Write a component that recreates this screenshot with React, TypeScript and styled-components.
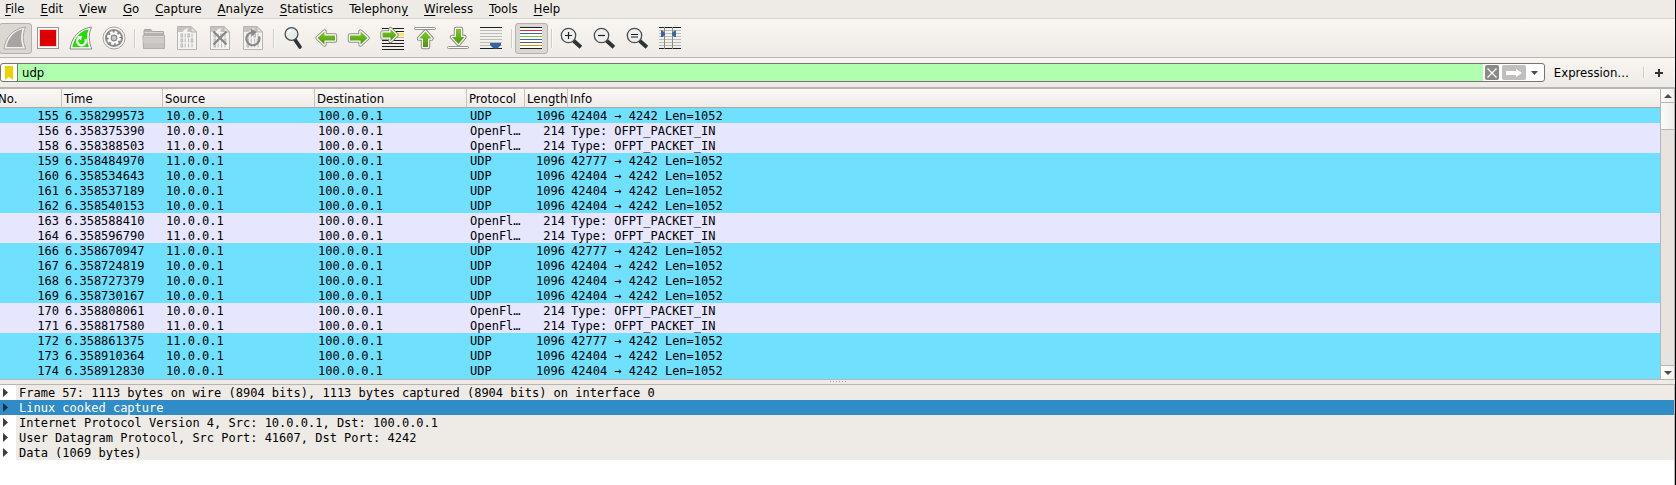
import React, { useState } from "react";
import styled, { createGlobalStyle } from "styled-components";

const UI_FONT = '"DejaVu Sans Condensed", "DejaVu Sans", sans-serif';
const MONO_FONT = '"DejaVu Sans Mono", monospace';
const LINE = "#b8b5b2";
const CHROME = "#eeebe7";

const GlobalStyle = createGlobalStyle`
  * { box-sizing: border-box; }
  body { margin: 0; background: #fff; }
  button, input { font: inherit; color: inherit; }
`;

const Window = styled.div`
  display: flex;
  flex-direction: column;
  min-height: 100vh;
  overflow: hidden;
  border-right: 1px solid #000;
  background: ${CHROME};
  font: 13px/16px ${UI_FONT};
  color: #000;
`;

const MenuBar = styled.nav`
  display: flex;
  height: 19px;
  border-bottom: 1px solid #d6d3cf;
`;

const MenuButton = styled.button`
  padding: 0 0 1px 5px;
  margin-right: 11px;
  border: 0;
  background: none;
  line-height: 16px;
  white-space: nowrap;

  u { text-underline-offset: 2px; }
`;

const ToolBar = styled.div`
  display: flex;
  align-items: center;
  height: 39px;
  margin-left: -1px;
  border-bottom: 1px solid ${LINE};
  background: linear-gradient(#f9f6f2, ${CHROME});
`;

const ToolButton = styled.button<{ $pressed?: boolean }>`
  display: flex;
  align-items: center;
  justify-content: center;
  width: 33px;
  height: 31px;
  padding: 0;
  border: 1px solid ${(p) => (p.$pressed ? "#b5b2ae" : "transparent")};
  border-radius: 3px;
  background: ${(p) => (p.$pressed ? "#dbd8d4" : "none")};
`;

const Separator = styled.span<{ $height: number }>`
  width: 2px;
  height: ${(p) => p.$height}px;
  margin: 0 2px 0 3px;
  border-left: 1px solid #d0cdc9;
  border-right: 1px solid #fbf9f7;
`;

const FilterBar = styled.form`
  display: flex;
  align-items: center;
  height: 31px;
  padding-right: 11px;
  border-bottom: 2px solid ${LINE};
  background: linear-gradient(#f9f6f2, ${CHROME});
`;

const FilterBox = styled.div`
  display: flex;
  flex: 1;
  align-items: center;
  height: 19px;
  border: 1px solid #777471;
  border-radius: 3px;
  background: #fff;
`;

const FilterInput = styled.input`
  flex: 1;
  min-width: 0;
  height: 17px;
  padding: 0 4px;
  margin-right: 2px;
  border: 0;
  border-left: 1px solid #777471;
  outline: 0;
  background: #afffaf;
`;

const BoxButton = styled.button<{ $width: number; $fill?: string }>`
  display: flex;
  align-items: center;
  justify-content: center;
  width: ${(p) => p.$width}px;
  height: 15px;
  padding: 0;
  margin-right: 3px;
  border: 0;
  border-radius: 2px;
  background: ${(p) => p.$fill || "none"};
`;

const BookmarkButton = styled(BoxButton)`
  margin: 0;
`;

const FlatButton = styled.button`
  padding: 0;
  border: 0;
  background: none;
  display: flex;
  align-items: center;
`;

const ExpressionButton = styled(FlatButton)`
  margin: 0 9px;
  padding: 1px 2px 0 0;
`;

const PacketPane = styled.section`
  display: flex;
  border-right: 1px solid ${LINE};
  border-bottom: 1px solid ${LINE};
`;

const PacketList = styled.div`
  flex: 1;
  min-width: 0;
  overflow: hidden;
  padding-bottom: 1px;
  background: #70e0ff;
`;

const PacketTable = styled.table`
  width: calc(100% + 4px);
  margin-left: -4px;
  table-layout: fixed;
  border-collapse: separate;
  border-spacing: 0;
`;

const Col = styled.col<{ $width?: number }>`
  width: ${(p) => (p.$width ? `${p.$width}px` : "auto")};
`;

const HeadCell = styled.th`
  height: 19px;
  padding: 2px 0 0 2px;
  overflow: hidden;
  border-right: 1px solid #c6c3bf;
  border-bottom: 1px solid #a9a6a3;
  background: linear-gradient(#fbf8f5, #eeece8);
  font-weight: normal;
  line-height: 16px;
  text-align: left;
  white-space: nowrap;

  &:last-child { border-right: 0; }
`;

const PacketRow = styled.tr<{ $openflow: boolean }>`
  background: ${(p) => (p.$openflow ? "#e6e6ff" : "#70e0ff")};
`;

const Cell = styled.td<{ $right?: boolean }>`
  height: 15px;
  padding: 2px 3px 0;
  overflow: hidden;
  font: 12px/13px ${MONO_FONT};
  text-align: ${(p) => (p.$right ? "right" : "left")};
  text-overflow: ellipsis;
  white-space: nowrap;
`;

const ScrollBar = styled.div`
  display: flex;
  flex-direction: column;
  width: 14px;
  border-left: 1px solid ${LINE};
  background: #e7e3e0;
`;

const ScrollButton = styled.button<{ $edge: "top" | "bottom" }>`
  display: flex;
  align-items: center;
  justify-content: center;
  height: 14px;
  padding: 0;
  border: 0;
  border-${(p) => p.$edge}: 1px solid ${LINE};
  background: linear-gradient(90deg, #fff, #f2f0ee);
`;

const ScrollThumb = styled.div`
  height: 27px;
  border-bottom: 1px solid ${LINE};
  background: linear-gradient(90deg, #fdfcfc, #efedeb);
`;

const ScrollTrack = styled.div`
  flex: 1;
`;

const Splitter = styled.div`
  display: flex;
  justify-content: center;
  gap: 2px;
  height: 4px;
  padding-top: 1px;
`;

const Dot = styled.span`
  width: 1px;
  height: 1px;
  background: #a5a29f;
`;

const Details = styled.ul`
  flex: 1;
  margin: 0;
  padding: 0;
  border-top: 1px solid ${LINE};
  border-right: 1px solid ${LINE};
  background: #fff;
  list-style: none;
`;

const DetailRow = styled.li<{ $selected: boolean }>`
  display: flex;
  height: 15px;
  background: ${(p) => (p.$selected ? "#308cc6" : "#fff")};
  color: ${(p) => (p.$selected ? "#fff" : "#000")};
`;

const Expander = styled.button<{ $selected: boolean }>`
  display: flex;
  align-items: center;
  width: 16px;
  padding: 0 0 0 3px;
  border: 0;
  background: none;
  color: ${(p) => (p.$selected ? "#12303f" : "#3c3c3c")};
`;

const DetailText = styled.span<{ $selected: boolean }>`
  flex: 1;
  padding: 2px 0 0 3px;
  background: ${(p) => (p.$selected ? "#308cc6" : CHROME)};
  font: 12px/13px ${MONO_FONT};
  white-space: pre;
`;

const Icon = ({ children }: { children: React.ReactNode }) => (
  <svg width="25" height="25" viewBox="0 0 25 25" aria-hidden="true">
    {children}
  </svg>
);

const FIN = "M1 23 C2.5 12 9 3 22.5 1 C19.5 8 19.5 15 22.8 23 Z";
const FIN_INNER = "M3.4 21 C5 13 10 5.500 19.500 3.300 C17.500 9 17.500 15 19.800 21 Z";

const SharkFin = () => (
  <Icon>
    <path d={FIN} fill="#f0efed" stroke="#a9a6a3" />
    <path d={FIN_INNER} fill="#a8a4a1" />
  </Icon>
);

const StopIcon = () => (
  <Icon>
    <rect x="1.500" y="1.500" width="21" height="21" fill="#fff" stroke="#999693" />
    <rect x="3" y="3" width="18" height="18" fill="#f3cfcf" />
    <rect x="4" y="4" width="16" height="16" fill="#dc0000" />
  </Icon>
);

const RestartIcon = () => (
  <Icon>
    <path d={FIN} fill="#fff" stroke="#8b8885" />
    <path d={FIN_INNER} fill="#1ee000" />
    <path d="M9.500 12 A4.300 4.300 0 1 0 16.300 13" fill="none" stroke="#fff" strokeWidth="2.400" />
    <path d="M8 10.200 L13.300 9.700 L11.800 14.600 Z" fill="#fff" />
  </Icon>
);

const OptionsIcon = () => (
  <Icon>
    <circle cx="12" cy="12" r="11" fill="#f7f6f5" stroke="#a6a3a0" />
    <circle cx="12" cy="12" r="9" fill="#8c8a88" />
    <circle cx="12" cy="12" r="5.800" fill="none" stroke="#fff" strokeWidth="2.600" strokeDasharray="2.600 1.950" />
    <circle cx="12" cy="12" r="4.200" fill="#8c8a88" stroke="#fff" strokeWidth="2.400" />
    <circle cx="12" cy="12" r="3.400" fill="#8c8a88" />
    <circle cx="12" cy="12" r="2.200" fill="#c9c7c5" />
  </Icon>
);

const FolderIcon = () => (
  <Icon>
    <path d="M2 22 V4.500 Q2 3.500 3 3.500 H9 L10.500 5.500 H21.500 V22 Z" fill="#b5b2af" stroke="#a7a4a1" />
    <path d="M2.500 6.500 H21" stroke="#d8d6d3" />
    <path d="M1 9.500 H22.500 V22.500 H1.500 Z" fill="#c6c3c0" stroke="#b0adaa" />
    <path d="M1.500 12 H22 V17 H1.500 Z" fill="#cfccc9" />
    <path d="M1.500 10.500 H22" stroke="#dddbd8" />
  </Icon>
);

const Bits = ({ y, bits }: { y: number; bits: string }) => (
  <g fill="none" stroke="#b9b6b3">
    {bits.split("").map((bit, i) =>
      bit === "0" ? (
        <rect key={i} x={6 + i * 3.4} y={y} width="1.600" height="3" />
      ) : (
        <path key={i} d={`M${6.8 + i * 3.4} ${y - 0.5} V${y + 3.5}`} />
      )
    )}
  </g>
);

const Sheet = ({ children }: { children?: React.ReactNode }) => (
  <Icon>
    <path d="M2.500 .5 H16 L21.500 6 V23.500 H2.500 Z" fill="#f5f4f2" stroke="#b7b4b1" />
    <path d="M3 1 H16 V6 H3 Z" fill="#c6c3c0" />
    <path d="M16 .5 V6 H21.500 Z" fill="#e3e1de" stroke="#b7b4b1" />
    <path d="M7.500 6.500 Q8.500 3 13.500 2 Q11.500 4 12.500 6.500 Z" fill="#f5f4f2" />
    <Bits y={8} bits="0101" />
    <Bits y={13} bits="0110" />
    <Bits y={18} bits="0111" />
    {children}
  </Icon>
);

const FindIcon = () => (
  <Icon>
    <path d="M13.500 13 L19 21" stroke="#2e3436" strokeWidth="3.600" strokeLinecap="round" />
    <circle cx="10.500" cy="8" r="6.400" fill="#e9ecec" stroke="#4b4f51" strokeWidth="1.300" />
    <path d="M6.800 7.500 Q7.500 4.500 10.500 4.200" fill="none" stroke="#fff" strokeWidth="1.600" />
  </Icon>
);

const Gradients = () => (
  <defs>
    <linearGradient id="leaf" x1="0" y1="0" x2="0" y2="1">
      <stop offset="0" stopColor="#7fca2c" />
      <stop offset="1" stopColor="#4a9a06" />
    </linearGradient>
  </defs>
);

const Arrow = ({ d }: { d: string }) => (
  <g strokeLinejoin="round">
    <path d={d} fill="none" stroke="#8f8d8a" strokeWidth="4.400" />
    <path d={d} fill="url(#leaf)" stroke="#fff" strokeWidth="2.400" />
    <path d={d} fill="url(#leaf)" />
  </g>
);

const BackIcon = () => (
  <Icon>
    <Gradients />
    <Arrow d="M3.500 12 L10.500 5.500 V9.500 H21 V14.500 H10.500 V18.500 Z" />
  </Icon>
);

const ForwardIcon = () => (
  <Icon>
    <Arrow d="M20.500 12 L13.500 5.500 V9.500 H3 V14.500 H13.500 V18.500 Z" />
  </Icon>
);

const GoToIcon = () => (
  <Icon>
    {[2, 5, 14, 17, 20, 23].map((y) => (
      <rect key={y} x="2" y={y} width="22" height="1" fill="#1d2021" />
    ))}
    <rect x="2" y="8" width="22" height="1" fill="#b5b2af" />
    <rect x="18" y="7" width="6" height="3" fill="#fce94f" />
    <rect x="2" y="11" width="22" height="1" fill="#b5b2af" />
    <Arrow d="M16.500 9 L10.500 3 V6.500 H2.500 V11.500 H10.500 V15 Z" />
  </Icon>
);

const Ledge = ({ y }: { y: number }) => (
  <rect x="1.500" y={y} width="21" height="2" rx="1" fill="#fff" stroke="#979592" />
);

const FirstIcon = () => (
  <Icon>
    <Ledge y={1.5} />
    <Arrow d="M12.500 5.500 L18.500 12.500 H15 V21 H10 V12.500 H6 Z" />
  </Icon>
);

const LastIcon = () => (
  <Icon>
    <Ledge y={20.5} />
    <Arrow d="M12.500 18 L18.500 11 H15 V3 H10 V11 H6 Z" />
  </Icon>
);

const Lines = ({ colors }: { colors: string[] }) => (
  <>
    {colors.map((color, i) => (
      <rect key={i} x="1" y={1 + i * 3} width="22" height="1" fill={color} />
    ))}
  </>
);

const DARK = "#1d2021";
const PALE = "#babdb6";
const RULED = [DARK, PALE, PALE, PALE, PALE, PALE, PALE, DARK];

const AutoScrollIcon = () => (
  <Icon>
    <Lines colors={RULED} />
    <path d="M11 17 H22 V19 L18.500 22.500 H14.500 L11 19 Z" fill="#3465a4" />
  </Icon>
);

const ColorizeIcon = () => (
  <Icon>
    <rect x="1" y="1" width="22" height="22" fill="#fff" />
    <Lines colors={[DARK, "#ef2929", "#3465a4", "#73d216", "#3465a4", "#75507b", "#c4a000", DARK]} />
  </Icon>
);

const Magnifier = ({ sign }: { sign: string }) => (
  <Icon>
    <path d="M15.500 15.500 L20.500 20" stroke="#2e3436" strokeWidth="3.800" strokeLinecap="square" />
    <circle cx="9.500" cy="9.500" r="7.200" fill="#efefed" stroke="#4b4f51" strokeWidth="1.300" />
    <path d={sign} stroke="#1d2021" strokeWidth="1.200" />
  </Icon>
);

const ResizeIcon = () => (
  <Icon>
    <Lines colors={RULED} />
    <path d="M6.500 1 V23 M14.500 1 V23" stroke="#888a85" />
    <path d="M3 4.500 H4.500 L7 7 V9 L4.500 11 H3 Z" fill="#3465a4" />
    <path d="M18 4.500 H16.500 L14 7 V9 L16.500 11 H18 Z" fill="#3465a4" />
  </Icon>
);

type Tool = { label: string; icon: React.ReactNode; pressed?: boolean };

const toolGroups: Tool[][] = [
  [
    { label: "Start capture", icon: <SharkFin />, pressed: true },
    { label: "Stop capture", icon: <StopIcon /> },
    { label: "Restart capture", icon: <RestartIcon /> },
    { label: "Capture options", icon: <OptionsIcon /> },
  ],
  [
    { label: "Open file", icon: <FolderIcon /> },
    { label: "Save file", icon: <Sheet /> },
    {
      label: "Close file",
      icon: (
        <Sheet>
          <path d="M5.500 5.500 L18.500 18.500 M18.500 5.500 L5.500 18.500" stroke="#8a8886" strokeWidth="2.200" />
        </Sheet>
      ),
    },
    {
      label: "Reload file",
      icon: (
        <Sheet>
          <path d="M10 6.500 A6.500 6.500 0 1 0 18 10.500" fill="none" stroke="#8a8886" strokeWidth="2.200" />
          <path d="M9.500 2.500 L16 6 L10.500 10.500 Z" fill="#8a8886" />
        </Sheet>
      ),
    },
  ],
  [
    { label: "Find packet", icon: <FindIcon /> },
    { label: "Previous packet", icon: <BackIcon /> },
    { label: "Next packet", icon: <ForwardIcon /> },
    { label: "Go to packet", icon: <GoToIcon /> },
    { label: "First packet", icon: <FirstIcon /> },
    { label: "Last packet", icon: <LastIcon /> },
    { label: "Auto scroll", icon: <AutoScrollIcon /> },
  ],
  [{ label: "Colorize packets", icon: <ColorizeIcon />, pressed: true }],
  [
    { label: "Zoom in", icon: <Magnifier sign="M6 9.500 H13 M9.500 6 V13" /> },
    { label: "Zoom out", icon: <Magnifier sign="M6 9.500 H13" /> },
    { label: "Normal size", icon: <Magnifier sign="M6 8.500 H13 M6 11 H13" /> },
    { label: "Resize columns", icon: <ResizeIcon /> },
  ],
];

// Each menu title with the position of its mnemonic letter.
const menus: [string, number][] = [
  ["File", 0], ["Edit", 0], ["View", 0], ["Go", 0], ["Capture", 0], ["Analyze", 0],
  ["Statistics", 0], ["Telephony", 8], ["Wireless", 0], ["Tools", 0], ["Help", 0],
];

const columns: { title: string; width?: number }[] = [
  { title: "No.", width: 66 },
  { title: "Time", width: 101 },
  { title: "Source", width: 152 },
  { title: "Destination", width: 152 },
  { title: "Protocol", width: 58 },
  { title: "Length", width: 43 },
  { title: "Info" },
];

// Number, time, source, and the UDP source port; no port marks an OpenFlow packet.
const packets: [number, string, string, number?][] = [
  [155, "6.358299573", "10.0.0.1", 42404],
  [156, "6.358375390", "10.0.0.1"],
  [158, "6.358388503", "11.0.0.1"],
  [159, "6.358484970", "11.0.0.1", 42777],
  [160, "6.358534643", "10.0.0.1", 42404],
  [161, "6.358537189", "10.0.0.1", 42404],
  [162, "6.358540153", "10.0.0.1", 42404],
  [163, "6.358588410", "10.0.0.1"],
  [164, "6.358596790", "11.0.0.1"],
  [166, "6.358670947", "11.0.0.1", 42777],
  [167, "6.358724819", "10.0.0.1", 42404],
  [168, "6.358727379", "10.0.0.1", 42404],
  [169, "6.358730167", "10.0.0.1", 42404],
  [170, "6.358808061", "10.0.0.1"],
  [171, "6.358817580", "11.0.0.1"],
  [172, "6.358861375", "11.0.0.1", 42777],
  [173, "6.358910364", "10.0.0.1", 42404],
  [174, "6.358912830", "10.0.0.1", 42404],
];

const details = [
  "Frame 57: 1113 bytes on wire (8904 bits), 1113 bytes captured (8904 bits) on interface 0",
  "Linux cooked capture",
  "Internet Protocol Version 4, Src: 10.0.0.1, Dst: 100.0.0.1",
  "User Datagram Protocol, Src Port: 41607, Dst Port: 4242",
  "Data (1069 bytes)",
];

export default function App() {
  const [filter, setFilter] = useState("udp");
  const [selected, setSelected] = useState(1);

  return (
    <Window>
      <GlobalStyle />
      <MenuBar>
        {menus.map(([name, at]) => (
          <MenuButton key={name} type="button">
            {name.slice(0, at)}
            <u>{name[at]}</u>
            {name.slice(at + 1)}
          </MenuButton>
        ))}
      </MenuBar>

      <ToolBar role="toolbar" aria-label="Main toolbar">
        {toolGroups.map((group, g) => (
          <React.Fragment key={g}>
            {g > 0 && <Separator $height={19} />}
            {group.map((tool) => (
              <ToolButton key={tool.label} type="button" aria-label={tool.label} $pressed={tool.pressed}>
                {tool.icon}
              </ToolButton>
            ))}
          </React.Fragment>
        ))}
      </ToolBar>

      <FilterBar onSubmit={(e) => e.preventDefault()}>
        <FilterBox>
          <BookmarkButton $width={16} type="button" aria-label="Filter bookmarks">
            <svg width="8" height="14" viewBox="0 0 8 14" aria-hidden="true">
              <path d="M0 0 H8 V14 L4 11 L0 14 Z" fill="#edd400" />
            </svg>
          </BookmarkButton>
          <FilterInput aria-label="Display filter" value={filter} onChange={(e) => setFilter(e.target.value)} />
          <BoxButton $width={14} $fill="#888a85" type="button" aria-label="Clear filter" onClick={() => setFilter("")}>
            <svg width="14" height="14" viewBox="0 0 14 14" aria-hidden="true">
              <path d="M2.500 2.500 L11.500 11.500 M11.500 2.500 L2.500 11.500" stroke="#fff" strokeWidth="1.300" />
            </svg>
          </BoxButton>
          <BoxButton $width={24} $fill="#c1bebb" type="submit" aria-label="Apply filter">
            <svg width="24" height="14" viewBox="0 0 24 14" aria-hidden="true">
              <path d="M4 5 H14 V3 L20 7 L14 11 V9 H4 Z" fill="#fff" />
            </svg>
          </BoxButton>
          <BoxButton $width={12} type="button" aria-label="Recent filters">
            <svg width="7" height="4" viewBox="0 0 7 4" aria-hidden="true">
              <path d="M0 0 H7 L3.500 4 Z" fill="#4a4a4a" />
            </svg>
          </BoxButton>
        </FilterBox>
        <ExpressionButton type="button">Expression…</ExpressionButton>
        <Separator $height={11} />
        <FlatButton type="button" aria-label="Add filter button">
          <svg width="17" height="10" viewBox="0 0 17 10" aria-hidden="true">
            <path d="M8 5 H16 M12 1 V9" stroke="#333" strokeWidth="2" />
          </svg>
        </FlatButton>
      </FilterBar>

      <PacketPane>
        <PacketList>
          <PacketTable>
            <colgroup>
              {columns.map((c) => (
                <Col key={c.title} $width={c.width} />
              ))}
            </colgroup>
            <thead>
              <tr>
                {columns.map((c) => (
                  <HeadCell key={c.title} scope="col">{c.title}</HeadCell>
                ))}
              </tr>
            </thead>
            <tbody>
              {packets.map(([no, time, source, port]) => (
                <PacketRow key={no} $openflow={!port}>
                  <Cell $right>{no}</Cell>
                  <Cell>{time}</Cell>
                  <Cell>{source}</Cell>
                  <Cell>100.0.0.1</Cell>
                  <Cell>{port ? "UDP" : "OpenFlow"}</Cell>
                  <Cell $right>{port ? 1096 : 214}</Cell>
                  <Cell>{port ? `${port} → 4242 Len=1052` : "Type: OFPT_PACKET_IN"}</Cell>
                </PacketRow>
              ))}
            </tbody>
          </PacketTable>
        </PacketList>
        <ScrollBar>
          <ScrollButton $edge="bottom" type="button" aria-label="Scroll up">
            <svg width="8" height="4" viewBox="0 0 8 4" aria-hidden="true">
              <path d="M0 4 H8 L4 0 Z" fill="#4a4a4a" />
            </svg>
          </ScrollButton>
          <ScrollThumb />
          <ScrollTrack />
          <ScrollButton $edge="top" type="button" aria-label="Scroll down">
            <svg width="8" height="4" viewBox="0 0 8 4" aria-hidden="true">
              <path d="M0 0 H8 L4 4 Z" fill="#4a4a4a" />
            </svg>
          </ScrollButton>
        </ScrollBar>
      </PacketPane>

      <Splitter role="separator">
        {[0, 1, 2, 3, 4, 5].map((i) => (
          <Dot key={i} />
        ))}
      </Splitter>

      <Details>
        {details.map((text, i) => (
          <DetailRow key={text} $selected={i === selected} onClick={() => setSelected(i)}>
            <Expander type="button" aria-label={`Expand ${text}`} $selected={i === selected}>
              <svg width="5" height="9" viewBox="0 0 5 9" aria-hidden="true">
                <path d="M0 0 L5 4.500 L0 9 Z" fill="currentColor" />
              </svg>
            </Expander>
            <DetailText $selected={i === selected}>{text}</DetailText>
          </DetailRow>
        ))}
      </Details>
    </Window>
  );
}
